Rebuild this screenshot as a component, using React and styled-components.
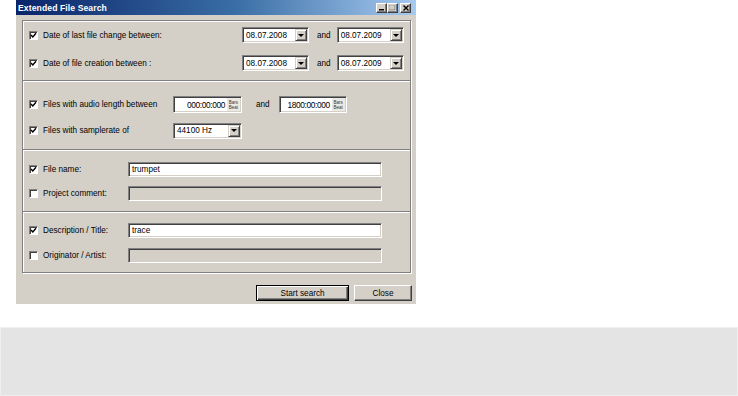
import React from 'react'
import styled, { createGlobalStyle } from 'styled-components'

const GlobalStyle = createGlobalStyle`
  html, body {
    margin: 0;
    padding: 0;
    background: #fff;
  }
  body {
    font-family: "Liberation Sans", Arial, sans-serif;
    font-size: 8.2px;
    color: #000;
  }
  * { box-sizing: border-box; }
`

const Page = styled.div`
  display: flex;
  flex-direction: column;
`

const DialogSlot = styled.div`
  display: flex;
  padding-left: 16px;
`

const Dialog = styled.div`
  width: 400px;
  background: #d4d0c8;
  display: flex;
  flex-direction: column;
  padding-bottom: 3px;
`

const TitleBar = styled.div`
  height: 15px;
  display: flex;
  align-items: center;
  justify-content: space-between;
  padding: 0 5px 0 2px;
  background: linear-gradient(to right, #0a246a 0%, #3a6ea5 55%, #a6caf0 100%);
`

const TitleText = styled.span`
  color: #fff;
  font-weight: bold;
  font-size: 8.6px;
  letter-spacing: 0.1px;
`

const CaptionButtons = styled.div`
  display: flex;
  align-items: center;
`

const CaptionButton = styled.div`
  width: 11px;
  height: 10px;
  margin-left: ${p => p.$gap || 0}px;
  background: #d4d0c8;
  border: 1px solid;
  border-color: #fff #404040 #404040 #fff;
  box-shadow: inset -1px -1px #808080;
  display: flex;
  align-items: center;
  justify-content: center;
`

const GroupBox = styled.div`
  margin: 5px 5px 0 6px;
  border: 1px solid #808080;
  box-shadow: inset 1px 1px #fff, 1px 1px #fff;
  display: flex;
  flex-direction: column;
`

const Section = styled.div`
  display: flex;
  flex-direction: column;
  gap: ${p => p.$gap}px;
  padding: ${p => p.$pt}px 0 ${p => p.$pb}px 6px;

  & + & {
    border-top: 1px solid #808080;
    box-shadow: inset 0 1px #fff;
  }
`

const Row = styled.div`
  height: ${p => p.$h}px;
  display: flex;
  align-items: center;
`

const CheckLabel = styled.label`
  width: ${p => p.$w}px;
  display: flex;
  align-items: center;
  gap: 5px;
  white-space: nowrap;
`

const CheckBox = styled.span`
  width: 9px;
  height: 9px;
  background: #fff;
  border: 1px solid;
  border-color: #808080 #fff #fff #808080;
  box-shadow: inset 1px 1px #404040;
  display: flex;
  align-items: center;
  justify-content: center;
`

const Combo = styled.div`
  width: ${p => p.$w}px;
  height: 16px;
  background: #fff;
  border: 1px solid;
  border-color: #808080 #fff #fff #808080;
  box-shadow: inset 1px 1px #404040, inset -1px -1px #d4d0c8;
  display: flex;
  align-items: center;
  padding: 1px 1px 1px 3px;
`

const ComboText = styled.span`
  flex: 1;
`

const DropButton = styled.span`
  width: 12px;
  height: 12px;
  background: #d4d0c8;
  border: 1px solid;
  border-color: #d4d0c8 #404040 #404040 #d4d0c8;
  box-shadow: inset 1px 1px #fff, inset -1px -1px #808080;
  display: flex;
  align-items: center;
  justify-content: center;

  &::after {
    content: "";
    border-left: 3px solid transparent;
    border-right: 3px solid transparent;
    border-top: 3px solid #000;
  }
`

const AndText = styled.span`
  margin: 0 ${p => p.$mr}px 0 ${p => p.$ml}px;
`

const TextField = styled.div`
  width: 254px;
  height: 15px;
  background: ${p => (p.$disabled ? '#d4d0c8' : '#fff')};
  border: 1px solid;
  border-color: #808080 #fff #fff #808080;
  box-shadow: inset 1px 1px #404040, inset -1px -1px #d4d0c8;
  display: flex;
  align-items: center;
  padding-left: 3px;
`

const LengthField = styled.div`
  width: ${p => p.$w}px;
  height: 17px;
  background: #fff;
  border: 1px solid;
  border-color: #808080 #fff #fff #808080;
  box-shadow: inset 1px 1px #404040, inset -1px -1px #d4d0c8;
  display: flex;
  align-items: center;
  justify-content: flex-end;
  padding: 1px 1px 1px 2px;
`

const LengthValue = styled.span`
  font-size: 8.4px;
  letter-spacing: -0.4px;
  margin-right: 2px;
`

const UnitTag = styled.span`
  width: 13px;
  height: 13px;
  background: #ebe9e4;
  display: flex;
  flex-direction: column;
  justify-content: center;
  font-size: 4.5px;
  line-height: 5px;
  color: #333;
  text-align: center;
`

const ButtonBar = styled.div`
  display: flex;
  justify-content: flex-end;
  gap: 5px;
  margin: 12px 4px 0 0;
`

const PushButton = styled.button`
  width: ${p => p.$w}px;
  height: 16px;
  padding: 0;
  font-family: inherit;
  font-size: 8.2px;
  color: #000;
  background: #d4d0c8;
  border: 1px solid;
  border-color: ${p => (p.$default ? '#000' : '#fff #404040 #404040 #fff')};
  box-shadow: ${p =>
    p.$default
      ? 'inset 1px 1px #fff, inset -1px -1px #404040, inset -2px -2px #808080'
      : 'inset -1px -1px #808080'};
`

const Band = styled.div`
  margin-top: 23px;
  height: 69px;
  background: #e4e4e4;
  border: 1px solid #efefef;
`

const Check = ({ on }) => (
  <CheckBox>
    {on && (
      <svg width="7" height="7" viewBox="0 0 7 7">
        <path d="M1 3 L2.8 5 L6 1.2" fill="none" stroke="#000" strokeWidth="1.4" />
      </svg>
    )}
  </CheckBox>
)

const Field = ({ checked, label, w, children, h }) => (
  <Row $h={h}>
    <CheckLabel $w={w}>
      <Check on={checked} />
      <span>{label}</span>
    </CheckLabel>
    {children}
  </Row>
)

const DateCombo = ({ value }) => (
  <Combo $w={67}>
    <ComboText>{value}</ComboText>
    <DropButton />
  </Combo>
)

const Length = ({ value, w }) => (
  <LengthField $w={w}>
    <LengthValue>{value}</LengthValue>
    <UnitTag>
      <span>Bars</span>
      <span>Beat</span>
    </UnitTag>
  </LengthField>
)

export default function App() {
  return (
    <>
      <GlobalStyle />
      <Page>
        <DialogSlot>
          <Dialog>
            <TitleBar>
              <TitleText>Extended File Search</TitleText>
              <CaptionButtons>
                <CaptionButton>
                  <svg width="6" height="6" viewBox="0 0 6 6">
                    <rect x="0" y="4" width="5" height="1.5" fill="#000" />
                  </svg>
                </CaptionButton>
                <CaptionButton>
                  <svg width="7" height="6" viewBox="0 0 7 6">
                    <rect x="0.5" y="0.5" width="6" height="5" fill="none" stroke="#fff" />
                    <rect x="0" y="0" width="6" height="5" fill="none" stroke="#808080" />
                  </svg>
                </CaptionButton>
                <CaptionButton $gap={2}>
                  <svg width="6" height="6" viewBox="0 0 6 6">
                    <path d="M0.5 0.5 L5.5 5.5 M5.5 0.5 L0.5 5.5" stroke="#000" strokeWidth="1.4" />
                  </svg>
                </CaptionButton>
              </CaptionButtons>
            </TitleBar>

            <GroupBox>
              <Section $pt={6} $gap={12} $pb={9}>
                <Field checked label="Date of last file change between:" w={213} h={16}>
                  <DateCombo value="08.07.2008" />
                  <AndText $ml={8} $mr={6}>and</AndText>
                  <DateCombo value="08.07.2009" />
                </Field>
                <Field checked label="Date of file creation between :" w={213} h={16}>
                  <DateCombo value="08.07.2008" />
                  <AndText $ml={8} $mr={6}>and</AndText>
                  <DateCombo value="08.07.2009" />
                </Field>
              </Section>

              <Section $pt={15} $gap={9} $pb={10}>
                <Field checked label="Files with audio length between" w={144} h={17}>
                  <Length value="000:00:000" w={69} />
                  <AndText $ml={14} $mr={9}>and</AndText>
                  <Length value="1800:00:000" w={68} />
                </Field>
                <Field checked label="Files with samplerate of" w={144} h={17}>
                  <Combo $w={69}>
                    <ComboText>44100 Hz</ComboText>
                    <DropButton />
                  </Combo>
                </Field>
              </Section>

              <Section $pt={12} $gap={9} $pb={10}>
                <Field checked label="File name:" w={99} h={15}>
                  <TextField>trumpet</TextField>
                </Field>
                <Field label="Project comment:" w={99} h={15}>
                  <TextField $disabled />
                </Field>
              </Section>

              <Section $pt={11} $gap={10} $pb={9}>
                <Field checked label="Description / Title:" w={99} h={15}>
                  <TextField>trace</TextField>
                </Field>
                <Field label="Originator / Artist:" w={99} h={15}>
                  <TextField $disabled />
                </Field>
              </Section>
            </GroupBox>

            <ButtonBar>
              <PushButton $default $w={93}>Start search</PushButton>
              <PushButton $w={58}>Close</PushButton>
            </ButtonBar>
          </Dialog>
        </DialogSlot>
        <Band />
      </Page>
    </>
  )
}
